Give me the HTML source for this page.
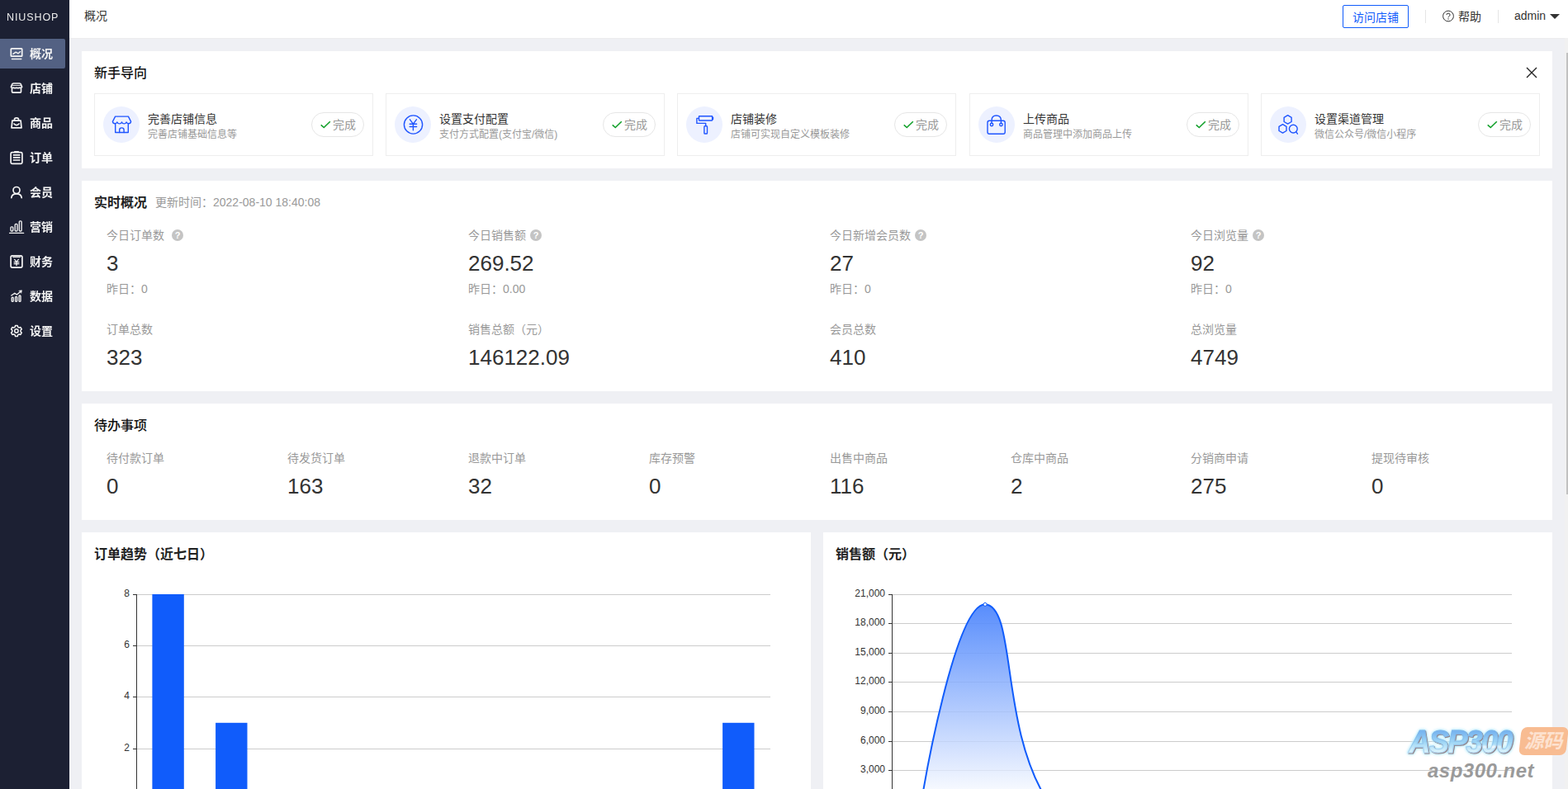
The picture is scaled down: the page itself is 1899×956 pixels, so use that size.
<!DOCTYPE html>
<html lang="zh-CN">
<head>
<meta charset="utf-8">
<title>概况</title>
<style>
*{box-sizing:border-box;margin:0;padding:0}
html,body{width:1899px;height:956px;overflow:hidden;background:#eff0f4}
body{position:relative;font-family:"Liberation Sans","Noto Sans CJK SC",sans-serif;font-size:14px;color:#333;line-height:1}
.abs{position:absolute;white-space:nowrap}
#side{position:absolute;left:0;top:0;width:84px;height:956px;background:#1c2033}
#logo{position:absolute;left:7.6px;top:11px;height:20px;line-height:20px;color:#ececec;will-change:transform;font-size:12.5px;letter-spacing:0.9px;white-space:nowrap}
.mi{position:absolute;left:0;width:79px;height:36px;color:#f4f4f4;font-size:14px;font-weight:700}
.mi.on{background:#536183;border-radius:0 2px 2px 0}
.mi svg{position:absolute;left:11px;top:9px;width:18px;height:18px;fill:none;stroke:#fff;stroke-width:1.4;stroke-linecap:round;stroke-linejoin:round}
.mi span{position:absolute;left:36px;top:0;line-height:36px;will-change:transform}
#head{position:absolute;left:84px;top:0;width:1815px;height:46px;background:#fff}
.card{position:absolute;background:#fff}
.ttl{position:absolute;left:15px;font-size:16px;color:#222;line-height:24px;white-space:nowrap}
.b{font-weight:700}
.g{color:#999}
.gi{position:absolute;top:51px;width:338px;height:76px;border:1px solid #eee;background:#fff}
.gi .ic{position:absolute;left:10px;top:15px;width:44px;height:44px;border-radius:50%;background:#edf1ff}
.gi .ic svg{position:absolute;left:0;top:0;width:44px;height:44px;fill:none;stroke:#1f55ff;stroke-width:1.4;stroke-linecap:round;stroke-linejoin:round}
.gi .t1{position:absolute;left:64px;top:20px;line-height:20px;font-size:14px;color:#333;white-space:nowrap}
.gi .t2{position:absolute;left:64px;top:39.5px;line-height:18px;font-size:12px;color:#999;white-space:nowrap}
.gi .ok{position:absolute;right:10px;top:22px;width:64px;height:30px;border:1px solid #e6e6e6;border-radius:15px;color:#999;font-size:14px;line-height:28px;white-space:nowrap}
.gi .ok svg{position:absolute;left:10px;top:8px;width:14px;height:12px}
.gi .ok span{position:absolute;left:25px;top:0}
.st{position:absolute;white-space:nowrap}
.lb{font-size:14px;color:#999;line-height:20px}
.vl{font-size:26px;color:#333;line-height:30px}
.q{display:inline-block;width:14px;height:14px;border-radius:50%;background:#c4c4c4;color:#fff;font-size:11px;font-weight:700;line-height:14px;text-align:center;vertical-align:top;margin:3px 0 0 9px}
svg text{font-family:"Liberation Sans","Noto Sans CJK SC",sans-serif}
</style>
</head>
<body>
<div id="side">
<div id="logo">NIUSHOP</div>
<div class="mi on" style="top:47px"><span>概况</span></div>
<div class="mi" style="top:89px"><span>店铺</span></div>
<div class="mi" style="top:131px"><span>商品</span></div>
<div class="mi" style="top:173px"><span>订单</span></div>
<div class="mi" style="top:215px"><span>会员</span></div>
<div class="mi" style="top:257px"><span>营销</span></div>
<div class="mi" style="top:299px"><span>财务</span></div>
<div class="mi" style="top:341px"><span>数据</span></div>
<div class="mi" style="top:383px"><span>设置</span></div>
<svg class="abs" style="left:0;top:0;fill:none;stroke:#f4f4f4;stroke-width:1.7;stroke-linejoin:round;stroke-linecap:round" width="84" height="956" viewBox="0 0 84 956"><rect x="13.3" y="58.8" width="13.4" height="9.4" rx="0.8"/><path d="M15.9 65.4L19.2 63.1L22.1 64.8L24.6 62.6" stroke-width="1.35"/><path d="M14.4 71.5H25.8" stroke-width="1.35"/><path d="M13.4 105.4L14.6 102.3Q15 101 16.4 101H23.6Q25 101 25.4 102.3L26.6 105.4Q25.4 107 23.6 106.2Q22 107.2 20 106.3Q18 107.2 16.4 106.2Q14.6 107 13.4 105.4Z"/><path d="M14.6 103.4H25.4" stroke-width="1"/><path d="M14.5 107.6V111Q14.5 112.1 15.6 112.1H24.4Q25.5 112.1 25.5 111V107.6"/><path d="M14.9 146.2H25.1L26 154.8H14L14.9 146.2Z"/><path d="M17.4 146V145.2Q17.4 142.9 20 142.9Q22.6 142.9 22.6 145.2V146"/><path d="M17 150Q20 153.2 23 150"/><rect x="13.1" y="184.7" width="13.8" height="13.7" rx="1.6"/><path d="M17.8 184H22.2" stroke-width="1.8"/><path d="M15.8 187.9H24.4M15.8 190.9H24.4M15.8 194H24.4" stroke-width="1.6" stroke-linecap="butt"/><circle cx="20" cy="230.5" r="4"/><path d="M13.8 239.6Q14.4 234.9 20 234.9Q25.6 234.9 26.2 239.6"/><path d="M11.6 282.4H28.6" stroke-width="1.35"/><rect x="13" y="274.8" width="2.8" height="5.2" rx="1" stroke-width="1.35"/><rect x="18.2" y="271.4" width="2.8" height="8.6" rx="1" stroke-width="1.35"/><rect x="23.3" y="267.8" width="2.8" height="12.2" rx="1" stroke-width="1.35"/><rect x="13.1" y="309.9" width="13.8" height="14.2" rx="1.8"/><path d="M15.6 311.6H24.6" stroke-width="1"/><path d="M17.6 314.4L20 317.2L22.4 314.4M20 317.2V321.6M17.2 317.6H22.8M17.2 319.6H22.8" stroke-width="1.35"/><rect x="14.2" y="360.2" width="2" height="5.2" rx="0.9" stroke-width="1.35"/><rect x="18.6" y="359.4" width="2" height="6" rx="0.9" stroke-width="1.35"/><rect x="23" y="358" width="2" height="7.4" rx="0.9" stroke-width="1.35"/><path d="M13.8 358L17.8 355.2L20.4 357L25 353.2" stroke-width="1.35"/><path d="M23.2 352.2L26.4 351.8L25.8 355Z" fill="#fff" stroke-width="0.6"/><path d="M18.17 396.10L18.57 394.43L21.23 394.43L21.63 396.10L23.28 397.05L24.92 396.56L26.25 398.87L25.01 400.05L25.01 401.95L26.25 403.13L24.92 405.44L23.28 404.95L21.63 405.90L21.23 407.57L18.57 407.57L18.17 405.90L16.52 404.95L14.88 405.44L13.55 403.13L14.79 401.95L14.79 400.05L13.55 398.87L14.88 396.56L16.52 397.05Z" stroke-width="1.5"/><circle cx="19.9" cy="401.0" r="2.2" stroke-width="1.5"/></svg>
</div>
<div id="head">
<div class="abs" style="left:18px;top:0;line-height:38px;font-size:14px;color:#333">概况</div>
<div class="abs" style="left:1542px;top:6px;width:80px;height:28px;border:1px solid #105cfb;border-radius:2px;color:#105cfb;font-size:14px;line-height:28px;text-align:center">访问店铺</div>
<div class="abs" style="left:1642px;top:12px;width:1px;height:16px;background:#e5e5e5"></div>
<svg class="abs" style="left:1662px;top:12px;width:16px;height:16px" viewBox="0 0 16 16"><circle cx="8" cy="7.5" r="6.4" fill="none" stroke="#333" stroke-width="1"/><path d="M5.9 6.1Q5.9 4.1 8 4.1Q10.1 4.1 10.1 6Q10.1 7.1 9 7.7Q8 8.3 8 9.3" fill="none" stroke="#333" stroke-width="1"/><circle cx="8" cy="11" r="0.7" fill="#333"/></svg>
<div class="abs" style="left:1682px;top:0;line-height:40px;font-size:14px;color:#333">帮助</div>
<div class="abs" style="left:1730px;top:12px;width:1px;height:16px;background:#e5e5e5"></div>
<div class="abs" style="left:1750px;top:0;line-height:38px;font-size:14px;color:#333">admin</div>
<div class="abs" style="left:1793px;top:17px;width:0;height:0;border-left:6px solid transparent;border-right:6px solid transparent;border-top:6px solid #333"></div>
</div>
<div class="card" style="left:99px;top:62px;width:1781px;height:142px">
<div class="ttl" style="top:15px;color:#111;font-weight:500">新手导向</div>
<div class="gi" style="left:15px"><div class="ic"><svg viewBox="0 0 44 44"><path d="M14.6 12.1H30.4L33.6 18.4Q33.2 20.7 30.9 20.7Q28.7 20.7 28.1 18.9Q27.3 20.9 25.3 20.9Q23.1 20.9 22.5 18.9Q21.9 20.9 19.7 20.9Q17.7 20.9 16.9 18.9Q16.3 20.7 14.1 20.7Q11.8 20.7 11.4 18.4Z"/><path d="M14.7 21.2V31.5H30.3V21.2"/><path d="M19.7 31.5V28.4Q19.7 25.9 22.4 25.9Q25.1 25.9 25.1 28.4V31.5"/></svg></div><div class="t1">完善店铺信息</div><div class="t2">完善店铺基础信息等</div><div class="ok"><svg viewBox="0 0 14 12"><path d="M0.7 6.3L4.3 9.5L11.8 2.2" fill="none" stroke="#12a02a" stroke-width="1.6"/></svg><span>完成</span></div></div>
<div class="gi" style="left:368px"><div class="ic"><svg viewBox="0 0 44 44"><circle cx="22.5" cy="22" r="11.1"/><path d="M18.4 15.8L22.4 21.2L26.4 15.8M22.4 21.2V28.8M18.2 21.3H26.6M18.2 24.5H26.6"/></svg></div><div class="t1">设置支付配置</div><div class="t2">支付方式配置(支付宝/微信)</div><div class="ok"><svg viewBox="0 0 14 12"><path d="M0.7 6.3L4.3 9.5L11.8 2.2" fill="none" stroke="#12a02a" stroke-width="1.6"/></svg><span>完成</span></div></div>
<div class="gi" style="left:721px"><div class="ic"><svg viewBox="0 0 44 44"><rect x="15.5" y="11.8" width="16.1" height="5.2" rx="0.4"/><path d="M32.4 13.2V15.6" stroke-width="1.6"/><path d="M15.5 14.4H12.9V20.4H23.7V23.4"/><rect x="21.9" y="23.8" width="3.6" height="9.2" rx="0.8"/></svg></div><div class="t1">店铺装修</div><div class="t2">店铺可实现自定义模板装修</div><div class="ok"><svg viewBox="0 0 14 12"><path d="M0.7 6.3L4.3 9.5L11.8 2.2" fill="none" stroke="#12a02a" stroke-width="1.6"/></svg><span>完成</span></div></div>
<div class="gi" style="left:1075px"><div class="ic"><svg viewBox="0 0 44 44"><rect x="11" y="17.2" width="21.2" height="16.1" rx="2.2"/><path d="M16 20.2V17Q16 11 21.6 11Q27.4 11 27.4 17V20.2"/><circle cx="16" cy="22" r="1.7"/><circle cx="27.4" cy="22" r="1.7"/></svg></div><div class="t1">上传商品</div><div class="t2">商品管理中添加商品上传</div><div class="ok"><svg viewBox="0 0 14 12"><path d="M0.7 6.3L4.3 9.5L11.8 2.2" fill="none" stroke="#12a02a" stroke-width="1.6"/></svg><span>完成</span></div></div>
<div class="gi" style="left:1428px"><div class="ic"><svg viewBox="0 0 44 44"><path d="M21.60 10.70L26.10 13.30L26.10 18.50L21.60 21.10L17.10 18.50L17.10 13.30Z"/><path d="M15.50 21.70L20.00 24.30L20.00 29.50L15.50 32.10L11.00 29.50L11.00 24.30Z"/><circle cx="28.3" cy="27.1" r="4.9"/><path d="M31.8 30.8L33.4 33.2"/></svg></div><div class="t1">设置渠道管理</div><div class="t2">微信公众号/微信小程序</div><div class="ok"><svg viewBox="0 0 14 12"><path d="M0.7 6.3L4.3 9.5L11.8 2.2" fill="none" stroke="#12a02a" stroke-width="1.6"/></svg><span>完成</span></div></div>
<svg class="abs" style="left:1748px;top:17.5px;width:16px;height:16px" viewBox="0 0 16 16"><path d="M2 2L14 14M14 2L2 14" stroke="#222" stroke-width="1.35" fill="none"/></svg>
</div>
<div class="card" style="left:99px;top:219px;width:1781px;height:255px">
<div class="ttl b" style="top:15px">实时概况</div>
<div class="abs g" style="left:89px;top:16px;line-height:20px;font-size:14px">更新时间：2022-08-10 18:40:08</div>
<div class="st lb" style="left:30px;top:56px">今日订单数<i class="q" style="font-style:normal">?</i></div><div class="st vl" style="left:30px;top:85px">3</div><div class="st lb" style="left:30px;top:121px">昨日：0</div><div class="st lb" style="left:30px;top:170px">订单总数</div><div class="st vl" style="left:30px;top:199px">323</div>
<div class="st lb" style="left:468px;top:56px">今日销售额<i class="q" style="font-style:normal;margin-left:5px">?</i></div><div class="st vl" style="left:468px;top:85px">269.52</div><div class="st lb" style="left:468px;top:121px">昨日：0.00</div><div class="st lb" style="left:468px;top:170px">销售总额（元）</div><div class="st vl" style="left:468px;top:199px">146122.09</div>
<div class="st lb" style="left:906px;top:56px">今日新增会员数<i class="q" style="font-style:normal;margin-left:5px">?</i></div><div class="st vl" style="left:906px;top:85px">27</div><div class="st lb" style="left:906px;top:121px">昨日：0</div><div class="st lb" style="left:906px;top:170px">会员总数</div><div class="st vl" style="left:906px;top:199px">410</div>
<div class="st lb" style="left:1343px;top:56px">今日浏览量<i class="q" style="font-style:normal;margin-left:5px">?</i></div><div class="st vl" style="left:1343px;top:85px">92</div><div class="st lb" style="left:1343px;top:121px">昨日：0</div><div class="st lb" style="left:1343px;top:170px">总浏览量</div><div class="st vl" style="left:1343px;top:199px">4749</div>
</div>
<div class="card" style="left:99px;top:489px;width:1781px;height:141px">
<div class="ttl" style="top:15px;color:#111;font-weight:500">待办事项</div>
<div class="st lb" style="left:30px;top:56px">待付款订单</div><div class="st vl" style="left:30px;top:85px">0</div>
<div class="st lb" style="left:249px;top:56px">待发货订单</div><div class="st vl" style="left:249px;top:85px">163</div>
<div class="st lb" style="left:468px;top:56px">退款中订单</div><div class="st vl" style="left:468px;top:85px">32</div>
<div class="st lb" style="left:687px;top:56px">库存预警</div><div class="st vl" style="left:687px;top:85px">0</div>
<div class="st lb" style="left:906px;top:56px">出售中商品</div><div class="st vl" style="left:906px;top:85px">116</div>
<div class="st lb" style="left:1125px;top:56px">仓库中商品</div><div class="st vl" style="left:1125px;top:85px">2</div>
<div class="st lb" style="left:1343px;top:56px">分销商申请</div><div class="st vl" style="left:1343px;top:85px">275</div>
<div class="st lb" style="left:1562px;top:56px">提现待审核</div><div class="st vl" style="left:1562px;top:85px">0</div>
</div>
<div class="card" style="left:99px;top:645px;width:883px;height:311px">
<svg class="abs" style="left:0;top:0" width="883" height="311" viewBox="0 0 883 311">
<path d="M67 75.5H834" stroke="#ccc" stroke-width="1" shape-rendering="crispEdges"/><path d="M62 75.5H67" stroke="#333" stroke-width="1" shape-rendering="crispEdges"/><text x="58" y="77.7" font-size="12" fill="#333" text-anchor="end">8</text>
<path d="M67 137.5H834" stroke="#ccc" stroke-width="1" shape-rendering="crispEdges"/><path d="M62 137.5H67" stroke="#333" stroke-width="1" shape-rendering="crispEdges"/><text x="58" y="139.7" font-size="12" fill="#333" text-anchor="end">6</text>
<path d="M67 199.5H834" stroke="#ccc" stroke-width="1" shape-rendering="crispEdges"/><path d="M62 199.5H67" stroke="#333" stroke-width="1" shape-rendering="crispEdges"/><text x="58" y="201.7" font-size="12" fill="#333" text-anchor="end">4</text>
<path d="M67 262.5H834" stroke="#ccc" stroke-width="1" shape-rendering="crispEdges"/><path d="M62 262.5H67" stroke="#333" stroke-width="1" shape-rendering="crispEdges"/><text x="58" y="264.7" font-size="12" fill="#333" text-anchor="end">2</text>
<path d="M66.5 75V311" stroke="#333" stroke-width="1" shape-rendering="crispEdges"/>
<rect x="85.4" y="75.0" width="38.4" height="236.0" fill="#105cfb"/>
<rect x="162.1" y="230.8" width="38.4" height="80.2" fill="#105cfb"/>
<rect x="776.1" y="230.8" width="38.4" height="80.2" fill="#105cfb"/>
</svg>
<div class="ttl b" style="top:15px">订单趋势（近七日）</div>
</div>
<div class="card" style="left:997px;top:645px;width:883px;height:311px">
<svg class="abs" style="left:0;top:0" width="883" height="311" viewBox="0 0 883 311">
<defs><linearGradient id="ag" x1="0" y1="87" x2="0" y2="324" gradientUnits="userSpaceOnUse"><stop offset="0" stop-color="#105cfb" stop-opacity="0.7"/><stop offset="1" stop-color="#105cfb" stop-opacity="0"/></linearGradient></defs>
<path d="M84 75.5H834" stroke="#ccc" stroke-width="1" shape-rendering="crispEdges"/><path d="M79 75.5H84" stroke="#333" stroke-width="1" shape-rendering="crispEdges"/><text x="75" y="77.7" font-size="12" fill="#333" text-anchor="end">21,000</text>
<path d="M84 110.5H834" stroke="#ccc" stroke-width="1" shape-rendering="crispEdges"/><path d="M79 110.5H84" stroke="#333" stroke-width="1" shape-rendering="crispEdges"/><text x="75" y="112.7" font-size="12" fill="#333" text-anchor="end">18,000</text>
<path d="M84 146.5H834" stroke="#ccc" stroke-width="1" shape-rendering="crispEdges"/><path d="M79 146.5H84" stroke="#333" stroke-width="1" shape-rendering="crispEdges"/><text x="75" y="148.7" font-size="12" fill="#333" text-anchor="end">15,000</text>
<path d="M84 181.5H834" stroke="#ccc" stroke-width="1" shape-rendering="crispEdges"/><path d="M79 181.5H84" stroke="#333" stroke-width="1" shape-rendering="crispEdges"/><text x="75" y="183.7" font-size="12" fill="#333" text-anchor="end">12,000</text>
<path d="M84 217.5H834" stroke="#ccc" stroke-width="1" shape-rendering="crispEdges"/><path d="M79 217.5H84" stroke="#333" stroke-width="1" shape-rendering="crispEdges"/><text x="75" y="219.7" font-size="12" fill="#333" text-anchor="end">9,000</text>
<path d="M84 253.5H834" stroke="#ccc" stroke-width="1" shape-rendering="crispEdges"/><path d="M79 253.5H84" stroke="#333" stroke-width="1" shape-rendering="crispEdges"/><text x="75" y="255.7" font-size="12" fill="#333" text-anchor="end">6,000</text>
<path d="M84 288.5H834" stroke="#ccc" stroke-width="1" shape-rendering="crispEdges"/><path d="M79 288.5H84" stroke="#333" stroke-width="1" shape-rendering="crispEdges"/><text x="75" y="290.7" font-size="12" fill="#333" text-anchor="end">3,000</text>
<path d="M83.5 75V311" stroke="#333" stroke-width="1" shape-rendering="crispEdges"/>
<path d="M121.03 313.92 C121.03 313.92 159.33 87.36 196.07 87.36 C234.38 90.09 213.47 233.47 271.12 324.60 C288.52 324.60 308.65 324.60 346.18 324.60 C383.70 324.60 383.70 324.60 421.22 324.60 C458.75 324.60 458.75 324.60 496.27 324.60 C533.80 324.60 533.80 324.60 571.33 324.60 C608.85 324.60 608.85 324.60 646.38 324.60 C683.90 324.60 683.90 324.60 721.42 324.60 C758.95 324.60 796.48 324.60 796.48 324.60 L796.48 324.60 L121.03 324.60 Z" fill="#fff" fill-opacity="0.75" stroke="none"/>
<path d="M121.03 313.92 C121.03 313.92 159.33 87.36 196.07 87.36 C234.38 90.09 213.47 233.47 271.12 324.60 C288.52 324.60 308.65 324.60 346.18 324.60 C383.70 324.60 383.70 324.60 421.22 324.60 C458.75 324.60 458.75 324.60 496.27 324.60 C533.80 324.60 533.80 324.60 571.33 324.60 C608.85 324.60 608.85 324.60 646.38 324.60 C683.90 324.60 683.90 324.60 721.42 324.60 C758.95 324.60 796.48 324.60 796.48 324.60 L796.48 324.60 L121.03 324.60 Z" fill="url(#ag)" stroke="none"/>
<path d="M121.03 313.92 C121.03 313.92 159.33 87.36 196.07 87.36 C234.38 90.09 213.47 233.47 271.12 324.60 C288.52 324.60 308.65 324.60 346.18 324.60 C383.70 324.60 383.70 324.60 421.22 324.60 C458.75 324.60 458.75 324.60 496.27 324.60 C533.80 324.60 533.80 324.60 571.33 324.60 C608.85 324.60 608.85 324.60 646.38 324.60 C683.90 324.60 683.90 324.60 721.42 324.60 C758.95 324.60 796.48 324.60 796.48 324.60" fill="none" stroke="#105cfb" stroke-width="2"/>
<circle cx="196.07" cy="87.36" r="2" fill="#fff" stroke="#105cfb" stroke-width="1"/>
</svg>
<div class="ttl b" style="top:15px">销售额（元）</div>
</div>
<div class="abs" style="left:84px;top:46px;width:1811px;height:1px;background:#ececee"></div>
<div class="abs" style="left:1895px;top:46px;width:4px;height:910px;background:#f1f1f1"></div>
<div class="abs" style="left:1897px;top:64px;width:2px;height:535px;background:#c1c1c1"></div>
<div class="abs" id="wm" style="left:1700px;top:876px;width:199px;height:80px">
<div class="abs" id="wm1" style="left:3.5px;top:0px;font-size:38px;line-height:46px;font-weight:700;font-style:italic;letter-spacing:-2.2px;color:transparent;background:radial-gradient(ellipse 22px 3px at 104px 29px,rgba(255,255,255,.95),rgba(255,255,255,0) 100%),linear-gradient(180deg,#6eb0ef 24%,#9bd6f6 52%,#ddf5fc 78%);-webkit-background-clip:text;background-clip:text;-webkit-text-stroke:1px rgba(120,175,230,.5);filter:drop-shadow(1px 1px 0 #8a7a80) drop-shadow(0 0 1.6px #a8e6fb) drop-shadow(0 0 1.6px #c8f2ff);padding:0 8px 0 2px;transform:scaleX(.97);transform-origin:0 50%;opacity:.93">ASP300</div>
<div class="abs" style="left:141px;top:5px;width:57px;height:34px;border-radius:7px;background:#f8b88c;opacity:.95;transform:skewX(-6.5deg)"></div>
<div class="abs" id="wm2" style="left:146px;top:6px;font-size:23.5px;line-height:32px;font-weight:700;font-style:italic;color:#fde2d0;letter-spacing:-0.5px">源码</div>
<div class="abs" id="wm3" style="left:29px;top:41.5px;font-size:24px;line-height:32px;font-weight:700;font-style:italic;color:#9a9a9a;letter-spacing:0.5px">asp300.net</div>
</div>
</body>
</html>
